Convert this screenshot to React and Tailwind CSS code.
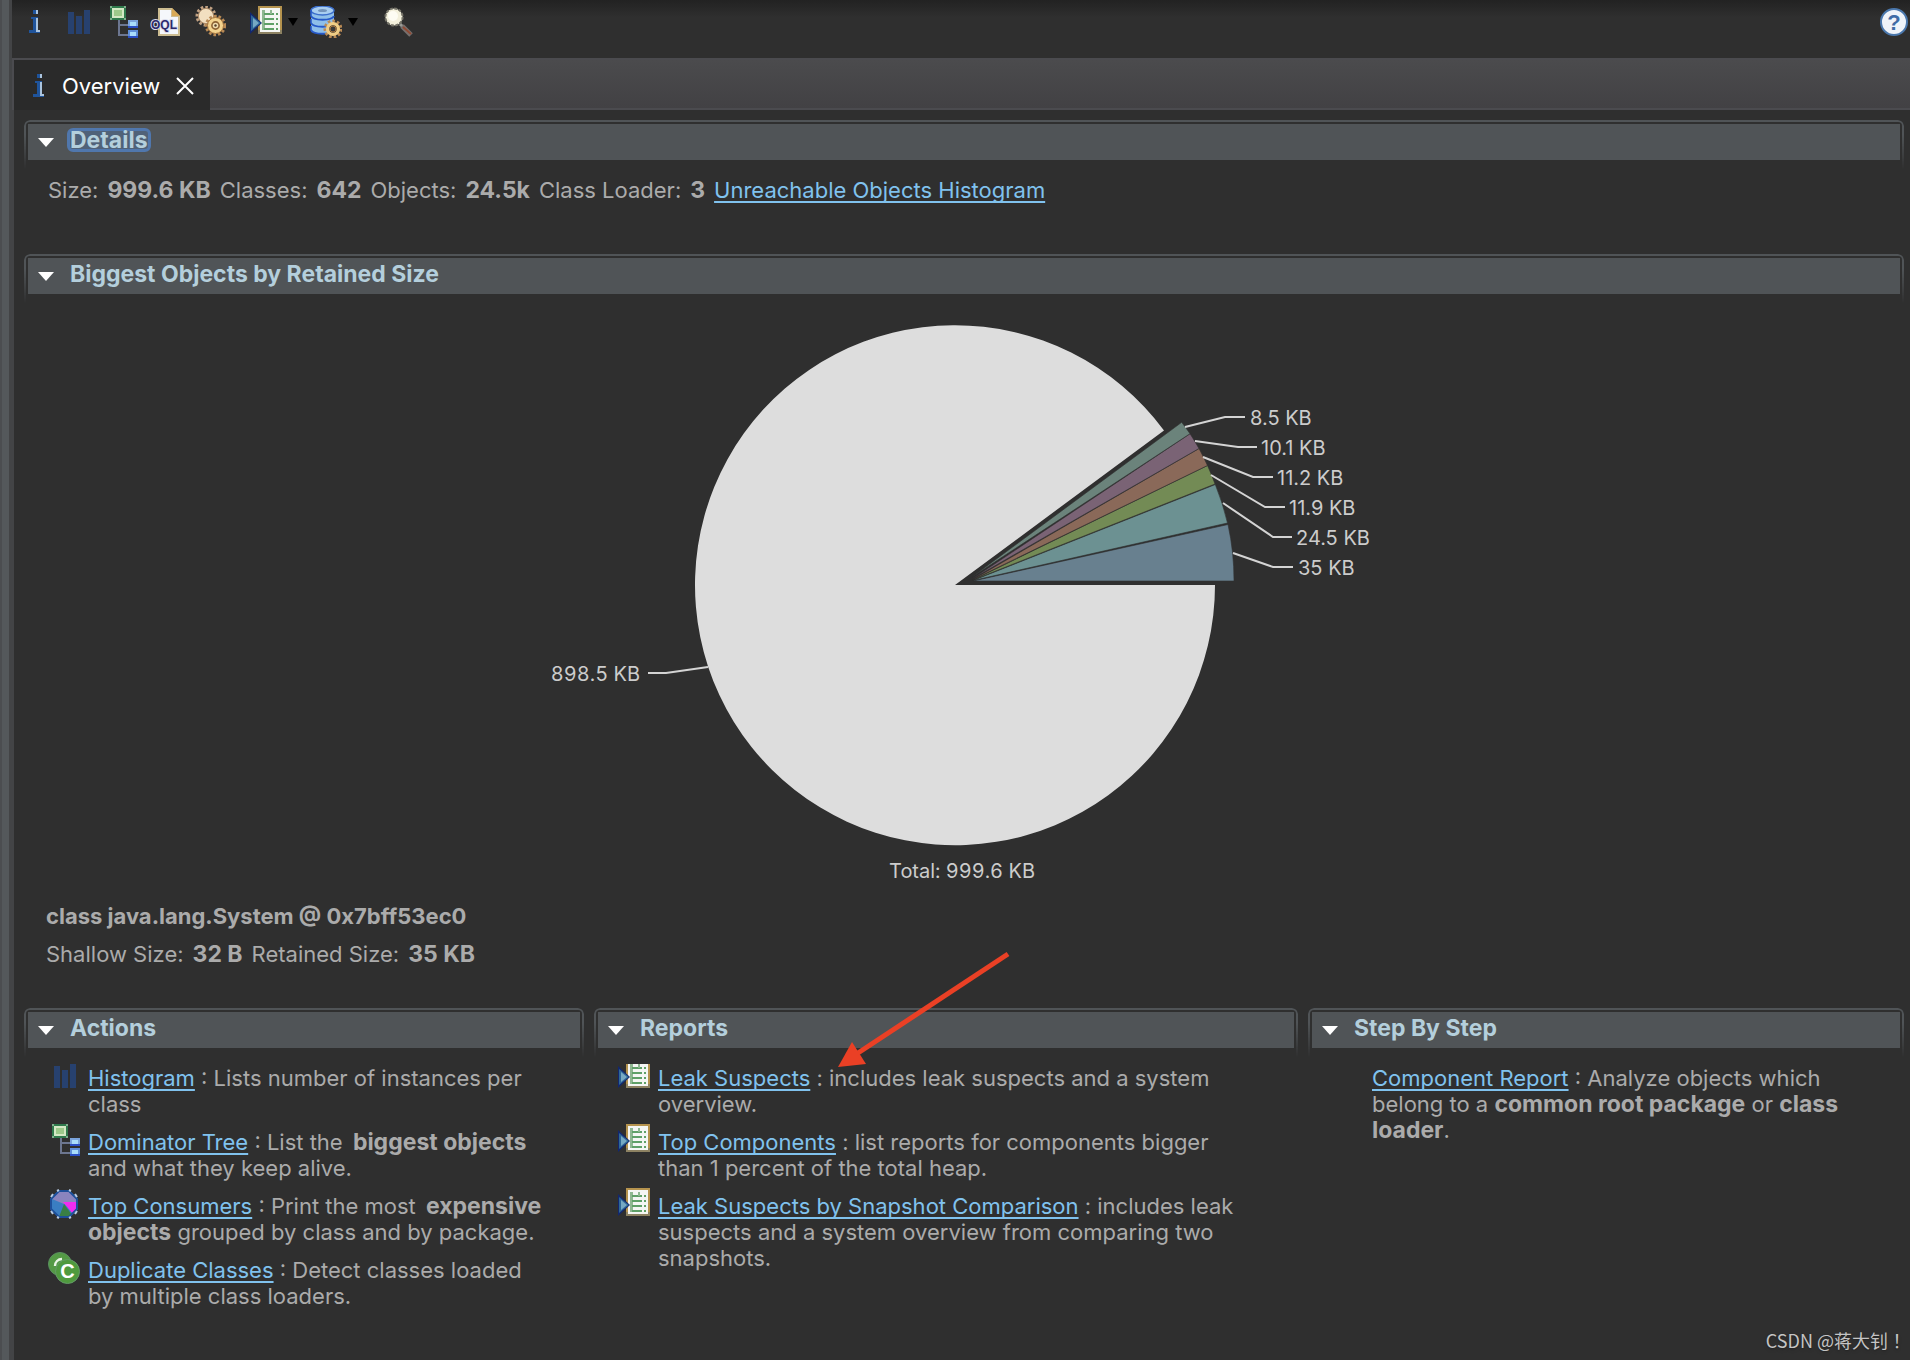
import { useState } from "react";
import clsx from "clsx";

// Chart data, listed from the horizontal axis upwards
const SLICES = [
	{
		label: "35 KB",
		color: "#68808f",
		d: "M973 581 L1234 581 A260 260 0 0 0 1228 524.5 Z",
		line: "1233,553 1273,567 1293,567",
		x: 1298,
		y: 575,
	},
	{
		label: "24.5 KB",
		color: "#6c9192",
		d: "M973 580.5 L1227.5 523 A260 260 0 0 0 1215.3 484.5 Z",
		line: "1223,503 1273,537 1292,537",
		x: 1296,
		y: 545,
	},
	{
		label: "11.9 KB",
		color: "#738b55",
		d: "M973 580 L1215 484 A260 260 0 0 0 1207.5 465.5 Z",
		line: "1211,475 1265,507 1285,507",
		x: 1289,
		y: 515,
	},
	{
		label: "11.2 KB",
		color: "#8a6959",
		d: "M972 580 L1207.5 465.5 A260 260 0 0 0 1199 448.5 Z",
		line: "1203,457 1253,477 1273,477",
		x: 1277,
		y: 485,
	},
	{
		label: "10.1 KB",
		color: "#7a6375",
		d: "M972 579 L1199 448.5 A260 260 0 0 0 1190 433.7 Z",
		line: "1195,441 1238,447 1257,447",
		x: 1261,
		y: 455,
	},
	{
		label: "8.5 KB",
		color: "#6b837b",
		d: "M972 577 L1190 433.7 A260 260 0 0 0 1181.7 422.3 Z",
		line: "1185,427 1225,417 1245,417",
		x: 1250,
		y: 425,
	},
];

function Svg({ children }) {
	return (
		<svg viewBox="0 0 32 32" className="block h-8 w-8 shrink-0" aria-hidden="true">
			{children}
		</svg>
	);
}

function InfoIcon() {
	return (
		<Svg>
			<path d="M15 4h5v4h-5zM13 11h7v13h2v3H11v-3h4V13h-2z" fill="#1f549c" />
			<path d="M18 4h2v4h-2zM18 12h2v12h2v2h-4z" fill="#a9c3de" />
		</Svg>
	);
}

function HistogramIcon() {
	return (
		<Svg>
			<path d="M6 6h6v22H6zM14 10h6v18h-6zM22 4h6v24h-6z" fill="#27416f" />
		</Svg>
	);
}

function TreeIcon() {
	return (
		<Svg>
			<path d="M12 14h2v4h8v2h-8v8h8v2H12z" fill="#6c7690" />
			<rect x="4" y="0" width="16" height="14" fill="#2f7a4c" />
			<path d="M4 0h2v2H4zM18 0h2v2h-2zM4 12h2v2H4zM18 12h2v2h-2z" fill="#7fae8d" />
			<rect x="6" y="2" width="12" height="10" fill="#d3e8c4" />
			<rect x="8" y="4" width="8" height="6" fill="#9cc98a" />
			<rect x="22" y="14" width="10" height="8" fill="#7ba4dc" />
			<rect x="22" y="20" width="10" height="2" fill="#2b4fc4" />
			<rect x="24" y="16" width="6" height="4" fill="#a9ddfb" />
			<rect x="22" y="24" width="10" height="8" fill="#5f8fd8" />
			<rect x="22" y="30" width="10" height="2" fill="#2b4fc4" />
			<rect x="24" y="26" width="6" height="4" fill="#a9ddfb" />
		</Svg>
	);
}

function OqlIcon() {
	return (
		<Svg>
			<path d="M8 2h14l8 8v20H8z" fill="#cdbd92" />
			<path d="M10 4h11v7h7v17H10z" fill="#f5f7fb" />
			<path d="M22 2l8 8h-8z" fill="#d9a955" />
			<text
				x="1"
				y="23"
				fontSize="12"
				fontWeight="700"
				fill="#2c2a6c"
				stroke="#d9dcec"
				strokeWidth="2"
				strokeLinejoin="round"
				paintOrder="stroke"
				fontFamily="Liberation Sans, sans-serif"
			>
				OQL
			</text>
		</Svg>
	);
}

function GearsIcon() {
	return (
		<Svg>
			<circle cx="12" cy="10" r="9" fill="none" stroke="#c2a284" strokeWidth="3" strokeDasharray="2.6 2" />
			<circle cx="12" cy="10" r="7.6" fill="#f2dfc0" stroke="#b18d68" strokeWidth="1" />
			<circle cx="21.5" cy="19.5" r="9.2" fill="none" stroke="#b98a55" strokeWidth="3" strokeDasharray="2.6 2" />
			<circle cx="21.5" cy="19.5" r="8" fill="#f3d38e" stroke="#a9773f" strokeWidth="1" />
			<circle cx="21.5" cy="19.5" r="3.6" fill="#f0dcae" stroke="#8c6234" strokeWidth="1.6" />
			<circle cx="21.5" cy="19.5" r="1.2" fill="#55402a" />
		</Svg>
	);
}

function ReportIcon() {
	return (
		<Svg>
			<rect x="8" y="0" width="24" height="28" fill="#b5934e" />
			<path d="M8 24h24v4H8z" fill="#8d8262" />
			<rect x="10" y="2" width="20" height="24" fill="#f4f6f3" />
			<path d="M12 4h3v20h-3z" fill="#8fb791" />
			<path d="M14 7h10v2H14zM14 12h10v2H14zM14 17h10v2H14zM14 22h10v2H14z" fill="#5fa067" />
			<path d="M20 4h2v4h-2z" fill="#8fb791" />
			<path d="M26 7h2v2h-2zM26 12h2v2h-2zM26 17h2v2h-2zM26 22h2v2h-2z" fill="#5fa067" />
			<path d="M0 6l12 11L0 28z" fill="#12276f" />
			<path d="M1 9l10 8-10 8z" fill="#2f6796" />
			<path d="M3 12l6 5-6 5z" fill="#76a9c4" />
		</Svg>
	);
}

function DatabaseIcon() {
	return (
		<Svg>
			<path d="M1 4c0-5 23-5 23 0v20c0 5-23 5-23 0z" fill="#8fbfe9" />
			<ellipse cx="12.5" cy="4.5" rx="11.5" ry="4.5" fill="#a8cdf0" stroke="#3a6dcb" strokeWidth="1.4" />
			<ellipse cx="12.5" cy="4.5" rx="4.5" ry="1.6" fill="#7393bb" />
			<path
				d="M1 10c2 5 21 5 23 0M1 17c2 5 21 5 23 0M1 24c2 5 21 5 23 0"
				fill="none"
				stroke="#2659c9"
				strokeWidth="2"
			/>
			<path d="M1 4v6M1 13v4M1 20v4" stroke="#2659c9" strokeWidth="1.6" />
			<circle cx="23" cy="23" r="8" fill="none" stroke="#b98a55" strokeWidth="3" strokeDasharray="2.6 2" />
			<circle cx="23" cy="23" r="5.4" fill="#3a3532" stroke="#f0cd85" strokeWidth="3.4" />
			<circle cx="23" cy="23" r="3" fill="#393939" stroke="#a9773f" strokeWidth="1" />
		</Svg>
	);
}

function SearchIcon() {
	return (
		<Svg>
			<path d="M18 18l3 3" stroke="#9a9a96" strokeWidth="3" />
			<path d="M20 20l9 9" stroke="#77706e" strokeWidth="5" />
			<path d="M21 21l8 7" stroke="#8f4a34" strokeWidth="2" />
			<circle cx="12" cy="11" r="8.6" fill="#f3f0dc" stroke="#77756a" strokeWidth="2" strokeDasharray="3 1.5" />
			<circle cx="11" cy="10" r="5" fill="#fdfcf3" />
		</Svg>
	);
}

function HelpIcon() {
	return (
		<Svg>
			<circle cx="16" cy="16" r="13" fill="#eff3f9" stroke="#4a77ac" strokeWidth="2" />
			<text
				x="16"
				y="24"
				textAnchor="middle"
				fontSize="22"
				fontWeight="700"
				fill="#3f6ca6"
				fontFamily="Liberation Sans, sans-serif"
			>
				?
			</text>
		</Svg>
	);
}

function ConsumersIcon() {
	return (
		<Svg>
			<path d="M11 2h10l9 9v10l-9 9H11l-9-9V11z" fill="#3a7ec2" />
			<path d="M16 16L4 11l7-8h10l8 8-1 5z" fill="#8a84be" />
			<path d="M15 14h14v7l-4 5z" fill="#f12cf0" />
			<path d="M16 16l8 11-3 2H11z" fill="#397f45" />
			<path d="M11 3h10l8 8v10l-8 8H11l-8-8V11z" fill="none" stroke="#1e4f99" strokeWidth="2" />
			<path
				d="M9 3l2-1M21 2l2 1M3 9l2-3M27 6l2 3M3 23l2 3M27 26l2-3M9 29l2 1M21 30l2-1"
				fill="none"
				stroke="#b7cbe3"
				strokeWidth="2"
			/>
		</Svg>
	);
}

function DuplicateIcon() {
	return (
		<Svg>
			<circle cx="12" cy="12" r="11.5" fill="#549a45" stroke="#5a8f60" />
			<path d="M7 14c0-4 3-7 7-7" fill="none" stroke="#eaf5e6" strokeWidth="2.4" />
			<circle cx="19.5" cy="19.5" r="12" fill="#4f9a3e" stroke="#649a68" />
			<text
				x="19.5"
				y="26"
				textAnchor="middle"
				fontSize="20"
				fontWeight="700"
				fill="#ffffff"
				fontFamily="Liberation Sans, sans-serif"
			>
				C
			</text>
		</Svg>
	);
}

function DropArrow() {
	return (
		<svg viewBox="0 0 10 8" className="block h-2 w-2.5" aria-hidden="true">
			<path d="M0 0h10L5 8z" fill="#000000" />
		</svg>
	);
}

function Section({ title, focused, children }) {
	const [open, setOpen] = useState(true);

	return (
		<section className="relative min-w-0">
			{/* Outline that fades out below the title bar */}
			<div className="pointer-events-none absolute inset-x-0 top-0 h-[50px] rounded-t-md border-2 border-b-0 border-[#505457] [mask-image:linear-gradient(to_bottom,black_30%,transparent)]" />
			<div className="px-1 pt-1">
				<h2>
					<button
						type="button"
						aria-expanded={open}
						onClick={() => setOpen(!open)}
						className="flex h-9 w-full items-center bg-[#505457] pb-1 pl-2.5 text-left text-[23px] font-bold leading-[26px] text-[#b4cfdc]"
					>
						<svg viewBox="0 0 16 9" className="mt-1 mr-[13px] h-[9px] w-4" aria-hidden="true">
							<path d="M0 0h16L8 9z" fill="#ffffff" />
						</svg>
						<span
							className={clsx(
								"flex items-center border-3",
								focused
									? "h-6 rounded-md border-[#5077ad] bg-[#5077ad]/40"
									: "border-transparent"
							)}
						>
							{title}
						</span>
					</button>
				</h2>
			</div>
			{open && children}
		</section>
	);
}

function Item({ icon, children }) {
	return (
		<li className="flex gap-2">
			<div className="-mt-1 h-8 w-8 shrink-0">{icon}</div>
			<p className="min-w-0 pt-px">{children}</p>
		</li>
	);
}

function Strong({ className, children }) {
	return (
		<strong className={clsx("text-[23px] leading-6 font-bold", className)}>
			{children}
		</strong>
	);
}

function Link({ children }) {
	return (
		<a
			href="#"
			className="text-[#80c2ee] underline decoration-2 underline-offset-3 [text-decoration-skip-ink:none]"
		>
			{children}
		</a>
	);
}

function PieChart() {
	return (
		<svg
			viewBox="540 294 848 609"
			className="mx-auto block w-[848px] max-w-full"
			role="img"
			aria-label="Biggest objects by retained size"
			fontSize="20"
			fill="#cccccc"
		>
			<path d="M955 585 L1215 585 A260 260 0 1 1 1164 430.5 Z" fill="#dddddd" />
			{SLICES.map((slice) => (
				<g key={slice.label}>
					<path d={slice.d} fill={slice.color} stroke="#2f2f2f" strokeWidth="0.6" />
					<polyline points={slice.line} fill="none" stroke="#d4d4d4" strokeWidth="2" />
					<text x={slice.x} y={slice.y}>
						{slice.label}
					</text>
				</g>
			))}
			<polyline points="648,673 666,673 708,667" fill="none" stroke="#d4d4d4" strokeWidth="2" />
			<text x="640" y="681" textAnchor="end" className="tabular-nums">
				898.5 KB
			</text>
			<text x="962" y="878" textAnchor="middle" className="tabular-nums">
				Total: 999.6 KB
			</text>
		</svg>
	);
}

function Toolbar() {
	return (
		<div className="flex h-[58px] items-start bg-linear-to-b from-[#222222] to-[#2f2f2f] to-30% pt-1.5 pl-1.5">
			<div className="flex gap-3">
				<button type="button" aria-label="Overview"><InfoIcon /></button>
				<button type="button" aria-label="Histogram"><HistogramIcon /></button>
				<button type="button" aria-label="Dominator Tree"><TreeIcon /></button>
				<button type="button" aria-label="OQL"><OqlIcon /></button>
				<button type="button" aria-label="Thread Overview"><GearsIcon /></button>
			</div>
			<div className="ml-6 flex gap-3">
				<button type="button" aria-label="Run Report" className="flex items-center gap-1.5">
					<ReportIcon />
					<DropArrow />
				</button>
				<button type="button" aria-label="Query Browser" className="flex items-center gap-1.5">
					<DatabaseIcon />
					<DropArrow />
				</button>
			</div>
			<button type="button" aria-label="Search" className="ml-6"><SearchIcon /></button>
			<button type="button" aria-label="Help" className="ml-auto"><HelpIcon /></button>
		</div>
	);
}

export default function App() {
	return (
		<div className="relative flex min-h-screen bg-[#2f2f2f] font-['Inter',sans-serif] text-[22px] leading-[26px] text-[#ababab]">
			{/* Sash at the left of the editor */}
			<div className="w-3 shrink-0 border-r-3 border-l-2 border-r-[#434446] border-l-[#4b4d50] bg-[#54585b]" />

			<div className="flex min-w-0 flex-1 flex-col">
				<Toolbar />

				<div className="flex h-[52px] border-y-2 border-l-2 border-[#4b4b4f] bg-linear-to-b from-[#4b4b4d] to-[#424144]">
					<div className="-mb-0.5 flex w-49 items-center bg-[#2a2a2a] pt-0.5 pl-2 text-white">
						<InfoIcon />
						<button type="button" className="ml-2">Overview</button>
						<button type="button" aria-label="Close" className="ml-4">
							<svg viewBox="0 0 18 18" className="block h-[18px] w-[18px]" aria-hidden="true">
								<path d="M1 1l16 16M17 1L1 17" stroke="#ffffff" strokeWidth="2" />
							</svg>
						</button>
					</div>
				</div>

				<main className="flex-1 border-l-2 border-[#434446] pt-2.5 pr-1.5 pl-2.5">
					<Section title="Details" focused>
						<p className="flex flex-wrap items-baseline gap-x-[9px] pt-[17px] pb-[51px] pl-6">
							<span>Size:</span>
							<Strong>999.6 KB</Strong>
							<span>Classes:</span>
							<Strong>642</Strong>
							<span>Objects:</span>
							<Strong>24.5k</Strong>
							<span>Class Loader:</span>
							<Strong>3</Strong>
							<Link>Unreachable Objects Histogram</Link>
						</p>
					</Section>

					<Section title="Biggest Objects by Retained Size">
						<PieChart />
						<div className="pb-[41px] pl-[22px]">
							<p className="font-bold">class java.lang.System @ 0x7bff53ec0</p>
							<p className="flex items-baseline gap-x-[9px] pt-3">
								<span>Shallow Size:</span>
								<Strong>32 B</Strong>
								<span>Retained Size:</span>
								<Strong>35 KB</Strong>
							</p>
						</div>
					</Section>

					<div className="grid grid-cols-[560fr_704fr_596fr] gap-2.5">
						<Section title="Actions">
							<ul className="mt-4 flex flex-col gap-[11px] overflow-hidden pr-9 pl-6">
								<Item icon={<HistogramIcon />}>
									<Link>Histogram</Link> : Lists number of instances per class
								</Item>
								<Item icon={<TreeIcon />}>
									<Link>Dominator Tree</Link> : List the{" "}
									<Strong className="ml-1">biggest objects</Strong> and what they keep alive.
								</Item>
								<Item icon={<ConsumersIcon />}>
									<Link>Top Consumers</Link> : Print the most{" "}
									<Strong className="ml-1">expensive objects</Strong> grouped by class and by
									package.
								</Item>
								<Item icon={<DuplicateIcon />}>
									<Link>Duplicate Classes</Link> : Detect classes loaded by multiple class
									loaders.
								</Item>
							</ul>
						</Section>

						<Section title="Reports">
							<ul className="mt-4 flex flex-col gap-[11px] overflow-hidden pr-12 pl-6">
								<Item icon={<ReportIcon />}>
									<Link>Leak Suspects</Link> : includes leak suspects and a system overview.
								</Item>
								<Item icon={<ReportIcon />}>
									<Link>Top Components</Link> : list reports for components bigger than 1
									percent of the total heap.
								</Item>
								<Item icon={<ReportIcon />}>
									<Link>Leak Suspects by Snapshot Comparison</Link> : includes leak suspects
									and a system overview from comparing two snapshots.
								</Item>
							</ul>
							{/* Arrow that points at the Leak Suspects report */}
							<svg
								viewBox="0 0 180 120"
								className="pointer-events-none absolute -top-[58px] left-[240px] h-[120px] w-[180px]"
								aria-hidden="true"
							>
								<path d="M174 4L24 103" stroke="#ea4025" strokeWidth="5" />
								<path d="M4 117L18 92L32 114z" fill="#ea4025" />
							</svg>
						</Section>

						<Section title="Step By Step">
							<ul className="mt-4 overflow-hidden pr-6 pl-6">
								<Item>
									<Link>Component Report</Link> : Analyze objects which belong to a{" "}
									<Strong>common root package</Strong> or <Strong>class loader</Strong>.
								</Item>
							</ul>
						</Section>
					</div>
				</main>
			</div>

			<div className="absolute right-1 bottom-[7px] font-['Noto_Sans_CJK_SC',sans-serif] text-[18px] text-[#c4c4c4] text-shadow-md">
				CSDN @蒋大钊<span className="font-['Noto_Sans_CJK_TC',sans-serif]">！</span>
			</div>
		</div>
	);
}
